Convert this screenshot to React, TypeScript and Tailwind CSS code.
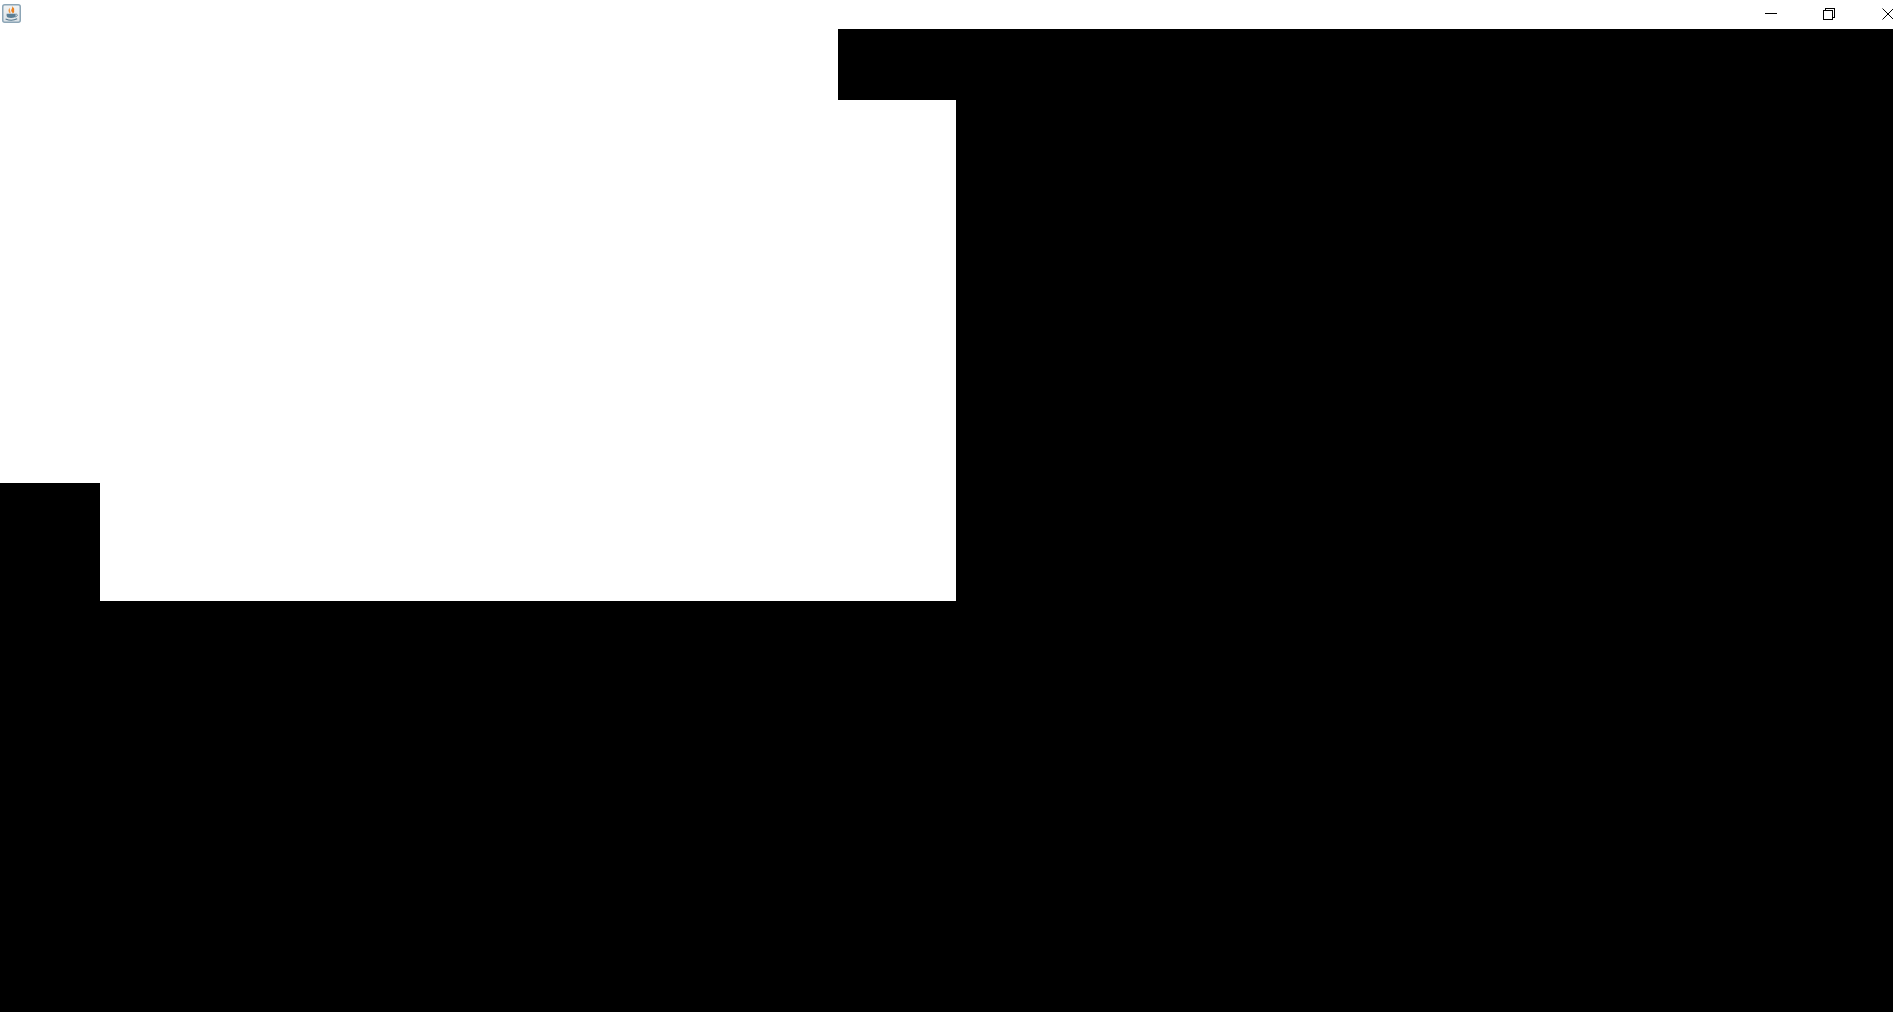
import React from "react";

function JavaIcon() {
  return (
    <svg width="19" height="19" viewBox="0 0 19 19" className="block">
      <defs>
        <linearGradient id="box" x1="0" y1="0" x2="0" y2="1">
          <stop offset="0" stopColor="#f2f4f5" />
          <stop offset="1" stopColor="#dbe2e7" />
        </linearGradient>
      </defs>
      <rect x="0.75" y="0.75" width="17.5" height="17.5" rx="2" fill="url(#box)" stroke="#8ca5b6" strokeWidth="1.5" />
      <path d="M9.5 1.8 C11.5 4 8.8 5.2 9.3 7 C9.6 8 10.8 8.3 10.6 9.6 C13.4 8.2 11.6 6.6 12.2 5.6 C12.6 4.6 11 3 9.5 1.8 Z" fill="#ea7f1e" />
      <path d="M7.8 3.8 C5.8 5.6 6.2 8 8 9.6 C9.4 9.6 7.6 6.6 7.8 3.8 Z" fill="#f09a45" />
      <path d="M4.6 9.8 H13.6 V11.6 C13.6 13.4 11.8 14 9.1 14 C6.4 14 4.6 13.4 4.6 11.6 Z" fill="#5b7f96" />
      <path d="M13.6 10.2 C16 9.8 16 12.4 13 13" fill="none" stroke="#5b7f96" strokeWidth="0.9" />
      <path d="M3.6 15 C7 16.4 12 16.4 15.2 14.8" fill="none" stroke="#54778d" strokeWidth="1.1" />
    </svg>
  );
}

function RestoreIcon() {
  return (
    <svg width="12" height="12" viewBox="0 0 12 12" className="block" shapeRendering="crispEdges">
      <path d="M0.5 2.5 H9.5 V11.5 H0.5 Z" fill="none" stroke="#000" />
      <path d="M2.5 2.5 V0.5 H11.5 V9.5 H9.5" fill="none" stroke="#000" />
    </svg>
  );
}

function CloseIcon() {
  return (
    <svg width="12" height="12" viewBox="0 0 12 12" className="block">
      <path d="M0.5 0.5 L11.5 11.5 M11.5 0.5 L0.5 11.5" fill="none" stroke="#000" strokeWidth="1" />
    </svg>
  );
}

export default function App() {
  return (
    <div className="flex h-[1012px] w-[1893px] flex-col overflow-hidden bg-black">
      {/* title bar, the close button runs off the right edge */}
      <div className="flex h-[29px] shrink-0 items-start bg-white">
        <div className="mt-[4px] ml-[2px]">
          <JavaIcon />
        </div>
        <div className="mr-[-1px] ml-auto flex items-start">
          <div className="mt-[13px] h-px w-[12px] bg-black" />
          <div className="mt-[8px] ml-[46px]">
            <RestoreIcon />
          </div>
          <div className="mt-[8px] ml-[47px]">
            <CloseIcon />
          </div>
        </div>
      </div>

      {/* canvas that only partly repainted */}
      <div className="h-[71px] w-[838px] shrink-0 bg-white" />
      <div className="h-[383px] w-[956px] shrink-0 bg-white" />
      <div className="flex h-[118px] shrink-0">
        <div className="w-[100px] bg-black" />
        <div className="w-[856px] bg-white" />
      </div>
    </div>
  );
}
